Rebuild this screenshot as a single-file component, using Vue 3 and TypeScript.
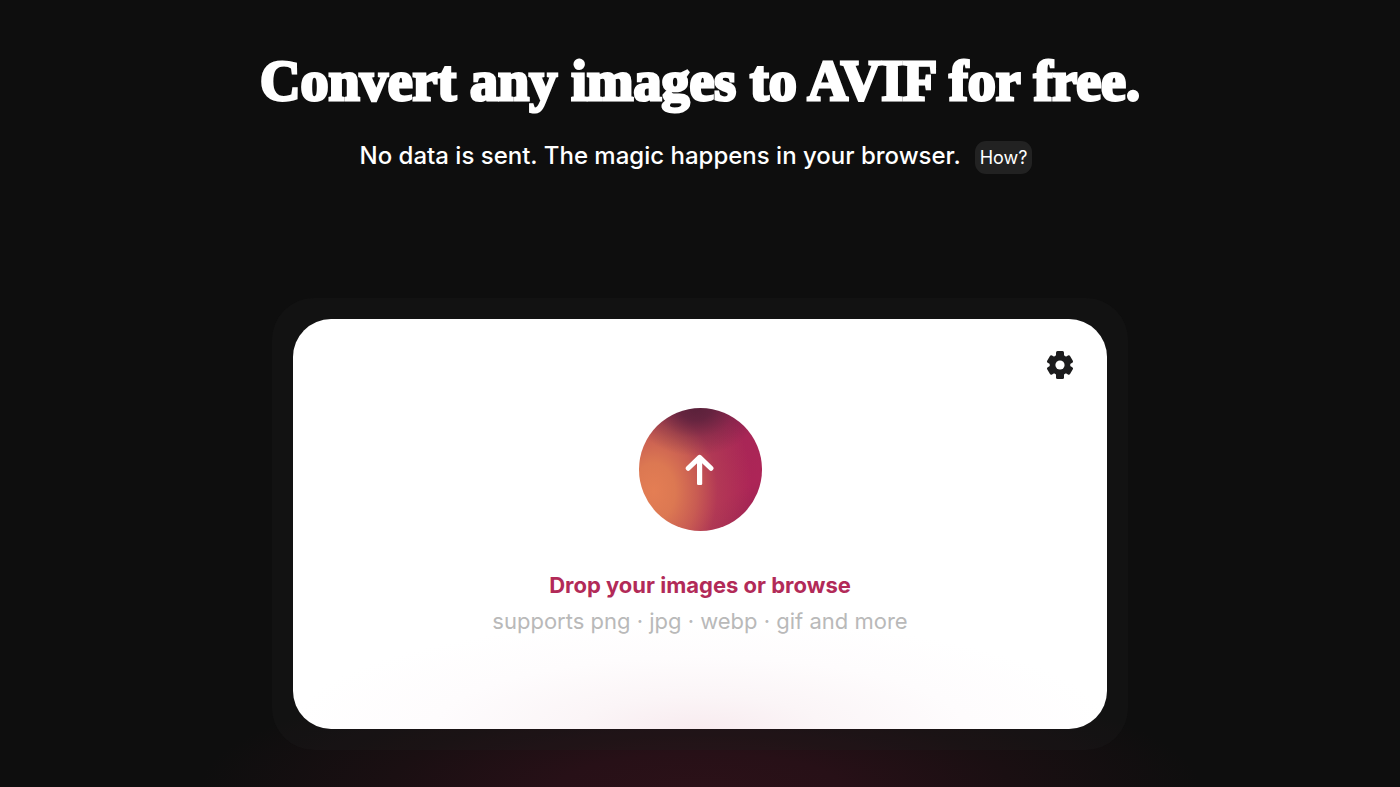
<script setup lang="ts">
import { ref } from 'vue'

const formats: string[] = ['png', 'jpg', 'webp', 'gif and more']
const picker = ref<HTMLInputElement | null>(null)

function browse(): void {
  picker.value?.click()
}
</script>

<template>
  <main class="page">
    <header class="intro">
      <h1>Convert any images to AVIF for free.</h1>
      <p class="tagline">
        <span>No data is sent. The magic happens in your browser.</span>
        <button type="button" class="how">How?</button>
      </p>
    </header>

    <section class="frame">
      <div class="card">
        <button type="button" class="settings" aria-label="Settings">
          <svg viewBox="-14 -14 28 28" width="28" height="28" aria-hidden="true">
            <g fill="#1c1c1d">
              <circle r="10.4" />
              <rect x="-4" y="-14" width="8" height="28" rx="1.5" />
              <rect x="-4.3" y="-13.2" width="8.6" height="26.4" rx="1.5" transform="rotate(60)" />
              <rect x="-4.3" y="-13.2" width="8.6" height="26.4" rx="1.5" transform="rotate(120)" />
            </g>
            <circle r="4.6" fill="#fff" />
          </svg>
        </button>
        <button type="button" class="upload" aria-label="Upload images" @click="browse">
          <svg viewBox="0 0 30 32" width="30" height="32" aria-hidden="true">
            <path d="M3.2 14.3 14.6 3.4 26 14.3" fill="none" stroke="#fff" stroke-width="5" stroke-linecap="round" stroke-linejoin="round" />
            <rect x="12" y="3" width="5.2" height="28" rx="1.2" fill="#fff" />
          </svg>
        </button>
        <label class="drop" for="files">Drop your images or browse</label>
        <input id="files" ref="picker" class="picker" type="file" accept="image/*" multiple />
        <p class="formats">supports {{ formats.join(' · ') }}</p>
      </div>
    </section>
  </main>
</template>

<style>
body {
  background: #0e0e0e;
}
</style>

<style scoped>
.page {
  box-sizing: border-box;
  min-height: 100vh;
  padding: 48px 24px 37px;
  overflow: hidden;
  display: flex;
  flex-direction: column;
  align-items: center;
  border-bottom: 2px solid #050304;
  background: radial-gradient(ellipse 500px 120px at 50% 100%, #2b1118 0%, #271017 28%, #1a0f12 62%, #0e0e0e 100%), #0e0e0e;
  color: #fff;
  font-family: Inter, "Open Sans", sans-serif;
}

.intro {
  text-align: center;
}

h1 {
  margin: 0;
  font-family: "Liberation Serif", serif;
  font-size: 56px;
  line-height: 66px;
  font-weight: 700;
  -webkit-text-stroke: 3px #fff;
}

.tagline {
  margin: 26px 8px 0 0;
  display: flex;
  justify-content: center;
  align-items: flex-end;
  gap: 14px;
  font-size: 24px;
  line-height: 32px;
  font-weight: 500;
}

.tagline span {
  padding-bottom: 2px;
}

.how {
  height: 33px;
  padding: 0 5px;
  border: 0;
  border-radius: 11px;
  background: #222;
  color: #fff;
  font: inherit;
  font-size: 18px;
  font-weight: 400;
}

.frame {
  box-sizing: border-box;
  width: 100%;
  max-width: 856px;
  margin-top: 124px;
  padding: 21px;
  border-radius: 42px;
  background: rgba(30, 30, 30, 0.25);
}

.card {
  position: relative;
  box-sizing: border-box;
  min-height: 410px;
  padding: 89px 24px 80px;
  display: flex;
  flex-direction: column;
  align-items: center;
  border-radius: 38px;
  background: radial-gradient(ellipse 410px 110px at 50% 100%, #f8ebef 0%, #fbf5f7 30%, #fefcfd 65%, #fff 100%);
}

.settings {
  position: absolute;
  top: 32px;
  right: 33px;
  padding: 0;
  border: 0;
  background: none;
}

.settings svg,
.upload svg {
  display: block;
}

.upload {
  width: 123px;
  height: 123px;
  padding: 0;
  border: 0;
  border-radius: 50%;
  display: flex;
  justify-content: center;
  align-items: center;
  background:
    radial-gradient(ellipse 64px 48px at 46% 0%, #5a213a 0%, rgba(84, 32, 58, 0.8) 25%, rgba(84, 32, 58, 0.3) 62%, rgba(84, 32, 58, 0) 100%),
    radial-gradient(ellipse 98px 130px at 12% 68%, #e47e54 0%, #dc7852 22%, rgba(204, 98, 82, 0.9) 44%, rgba(184, 72, 84, 0.55) 65%, rgba(174, 48, 84, 0) 100%),
    linear-gradient(150deg, #8f2450 0%, #a82656 45%, #ad2557 72%, #982350 100%);
}

.drop {
  margin-top: 38px;
  color: #b22a58;
  font-size: 22px;
  line-height: 32px;
  font-weight: 700;
}

.picker {
  display: none;
}

.formats {
  margin: 4px 0 0;
  color: #b9b9b9;
  font-size: 22px;
  line-height: 32px;
}
</style>
